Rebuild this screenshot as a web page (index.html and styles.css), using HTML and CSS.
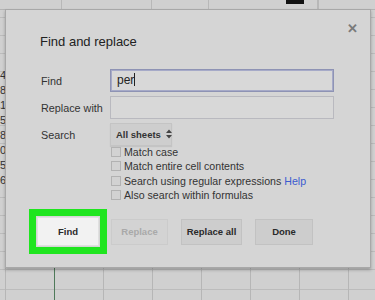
FILE: index.html
```html
<!DOCTYPE html>
<html lang="en">
<head>
    <meta charset="UTF-8">
    <meta name="viewport" content="width=device-width, initial-scale=1.0">
    <title>Find and replace</title>
    <link rel="stylesheet" href="styles.css">
</head>
<body>
    <div class="sheet">
        <div class="toolbar">
            <span class="tb-cell w62"></span>
            <span class="tb-cell w90"></span>
            <span class="tb-cell w57"></span>
            <span class="tb-cell w109"><i class="swatch"></i></span>
            <span class="tb-cell"></span>
        </div>
        <div class="grid">
            <div class="rownums">
                <span>4</span><span>8</span><span>1</span><span>5</span>
                <span>8</span><span>0</span><span>5</span><span>6</span>
            </div>
        </div>
    </div>

    <div class="dialog">
        <button class="close">&#x2715;</button>
        <h2>Find and replace</h2>

        <div class="form">
            <label>Find</label>
            <div class="input focus">per<span class="caret"></span></div>

            <label>Replace with</label>
            <div class="input"></div>

            <label>Search</label>
            <div class="select">All sheets
                <svg class="arrows" width="6" height="10" viewBox="0 0 6 10">
                    <path d="M0 4 L3 0.5 L6 4 Z M0 6 L3 9.5 L6 6 Z" fill="#444"/>
                </svg>
            </div>
        </div>

        <div class="checks">
            <div class="check"><span class="box"></span>Match case</div>
            <div class="check"><span class="box"></span>Match entire cell contents</div>
            <div class="check"><span class="box"></span>Search using regular expressions <a>Help</a></div>
            <div class="check"><span class="box"></span>Also search within formulas</div>
        </div>

        <div class="buttons">
            <button class="btn find">Find</button>
            <button class="btn disabled">Replace</button>
            <button class="btn wide">Replace all</button>
            <button class="btn">Done</button>
        </div>
    </div>
</body>
</html>
```

FILE: styles.css
```css
*{
    margin: 0px;
    padding: 0px;
    box-sizing: border-box;
    font-family: "Liberation Sans", Arial, sans-serif;
}
body{
    width: 375px;
    height: 300px;
    overflow: hidden;
    background: #d0d0d0;
    position: relative;
}

/* sheet behind */
.sheet{
    height: 300px;
    display: flex;
    flex-direction: column;
}
.toolbar{
    height: 10px;
    display: flex;
    border-bottom: 1px solid #b4b4b4;
}
.tb-cell{
    border-right: 1px solid #b8b8b8;
    position: relative;
}
.w62{ width: 62px; }
.w90{ width: 90px; }
.w57{ width: 57px; }
.w109{ width: 109px; }
.swatch{
    position: absolute;
    right: 13px;
    top: 0px;
    width: 18px;
    height: 4px;
    background: #111;
}
.grid{
    flex: 1;
    background:
        linear-gradient(90deg, transparent 54px, #4f7a5a 54px, #4f7a5a 55px, transparent 55px),
        repeating-linear-gradient(90deg, transparent 0px, transparent 5px, #b6b6b6 5px, #b6b6b6 6px, transparent 6px, transparent 49px),
        repeating-linear-gradient(180deg, transparent 0px, transparent 17px, #bcbcbc 17px, #bcbcbc 18px);
    background-position: 0 0, 0 0, 0 262px;
    position: relative;
}
.rownums{
    display: flex;
    flex-direction: column;
    padding-top: 58px;
    width: 6px;
    overflow: hidden;
    font-size: 11px;
    line-height: 15px;
    color: #333;
    direction: rtl;
}

/* dialog */
.dialog{
    position: absolute;
    left: 5px;
    top: 9px;
    width: 366px;
    height: 259px;
    background: #d5d5d5;
    border: 1px solid #a8a8a8;
    box-shadow: 0 2px 3px rgba(0,0,0,0.25);
    padding: 24px 0 0 34px;
    color: #2a2a2a;
}
.close{
    position: absolute;
    right: 12px;
    top: 11px;
    border: none;
    background: none;
    font-size: 13px;
    color: #7a7a7a;
    font-weight: bold;
}
.dialog h2{
    font-size: 13px;
    font-weight: normal;
    color: #222;
    line-height: 16px;
}
.form{
    display: grid;
    grid-template-columns: 70px 224px;
    row-gap: 4px;
    align-items: center;
    margin-top: 19px;
    margin-left: 0px;
}
.form label{
    font-size: 10.8px;
    color: #333;
    padding-left: 1px;
}
.input{
    height: 23px;
    border: 1px solid #b9b9bf;
    background: #d8d8d8;
    font-size: 12px;
    line-height: 21px;
    padding-left: 6px;
    color: #222;
}
.input.focus{
    border-color: #8e93b4;
    box-shadow: inset 0 0 0 1px #a6aac8;
}
.caret{
    display: inline-block;
    width: 1px;
    height: 13px;
    background: #222;
    vertical-align: -2px;
}
.select{
    width: 62px;
    height: 23px;
    border: 1px solid #c4c4c4;
    background: #cecece;
    font-size: 9.5px;
    font-weight: bold;
    color: #333;
    line-height: 21px;
    padding-left: 5px;
    box-shadow: 0 1px 1px rgba(0,0,0,0.08);
    white-space: nowrap;
}
.arrows{
    vertical-align: -1px;
    margin-left: 2px;
}

.checks{
    display: flex;
    flex-direction: column;
    margin-left: 71px;
    margin-top: -1px;
}
.check{
    display: flex;
    align-items: center;
    height: 14.3px;
    font-size: 10.6px;
    color: #333;
}
.box{
    width: 10px;
    height: 10px;
    border: 1px solid #b2b2b2;
    background: #d2d2d2;
    margin-right: 3px;
}
.check a{
    color: #3b5bd0;
    margin-left: 3px;
}

.buttons{
    display: flex;
    align-items: center;
    gap: 13px;
    margin-top: 15px;
    margin-left: -3px;
}
.btn{
    width: 58px;
    height: 26px;
    padding: 0;
    border: 1px solid #c2c2c2;
    background: #cdcdcd;
    font-size: 9.5px;
    font-weight: bold;
    color: #2a2a2a;
}
.btn.wide{
    width: 61px;
}
.btn.find{
    width: 62px;
    height: 29px;
    background: #f2f2f2;
    border-color: #e0e0e0;
    outline: 7px solid #1fe51f;
    outline-offset: 1px;
    margin-right: -1px;
}
.btn.disabled{
    width: 57px;
    color: #a9a9a9;
    background: #d3d3d3;
    border-color: #cbcbcb;
}
```
